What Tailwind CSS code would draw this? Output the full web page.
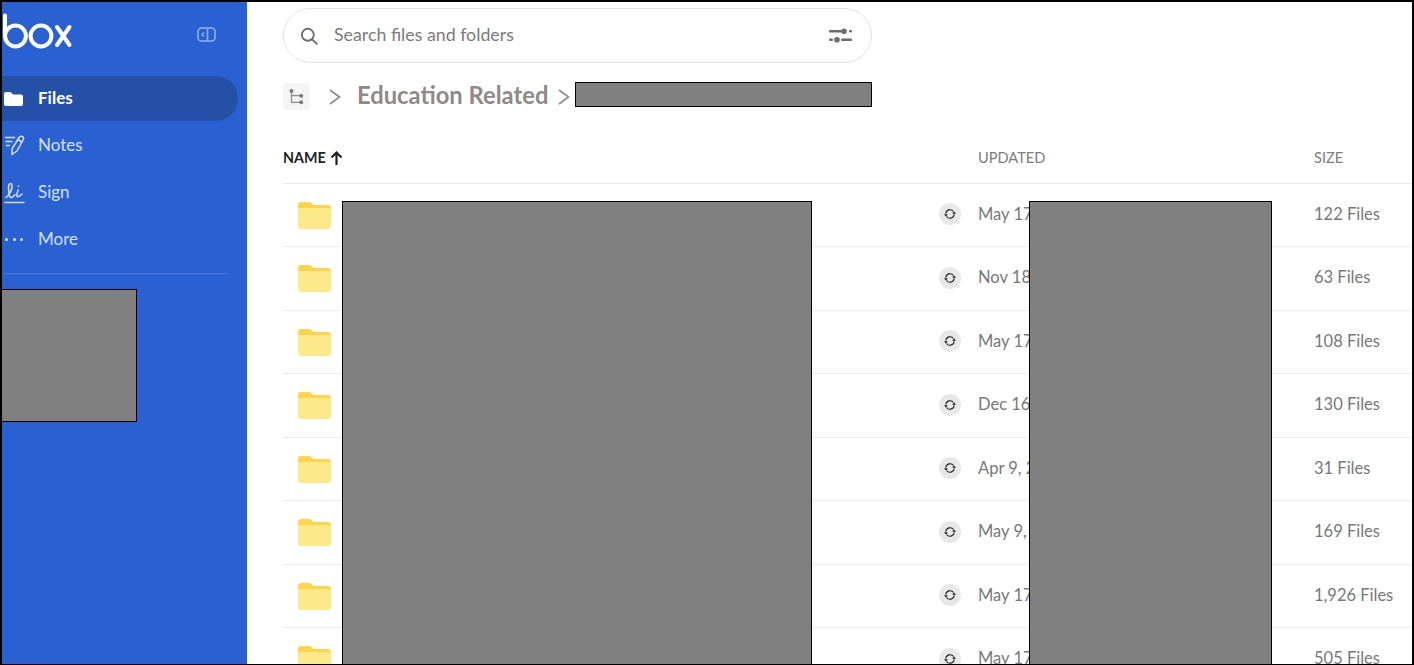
<!DOCTYPE html>
<html lang="en">

<head>
  <meta charset="UTF-8">
  <meta name="viewport" content="width=device-width, initial-scale=1.0">
  <title>Box Files</title>
  <script src="https://cdn.jsdelivr.net/npm/@tailwindcss/browser@4"></script>
</head>

<body class="bg-white text-[#787878] font-['Lato','Noto_Sans',sans-serif]">

  <div class="relative flex h-[665px] w-[1414px] overflow-hidden border-x-2 border-t-2 border-b border-black box-border">

    <!-- Sidebar -->
    <aside class="w-[245px] shrink-0 bg-[#2b60d3] text-[#d3e2fb]">
      <div class="flex h-[74px] items-start justify-between pr-[30px]">
        <svg class="ml-[1px] mt-[10px]" width="70" height="38" viewBox="0 0 70 38" fill="none" stroke="white" stroke-width="4" stroke-linecap="round">
          <path d="M2 3.500v20.500" />
          <circle cx="12.500" cy="24" r="10.400" />
          <circle cx="38" cy="24" r="10.400" />
          <path d="M54 15l12.500 18M66.500 15L54 33" />
        </svg>
        <svg class="mt-[24px]" width="20" height="18" viewBox="0 0 20 18" fill="none" stroke="#8db5f5" stroke-width="1.600">
          <rect x="1" y="2" width="17" height="13" rx="3.500" />
          <path d="M10.500 2v13" />
          <path d="M7 6.500l-2 2 2 2" stroke-width="1.400" />
        </svg>
      </div>

      <nav class="pr-[9px]">
        <a class="flex h-[45px] items-center rounded-r-full bg-[#2450a8] pb-[2px] text-[17px] font-bold text-white">
          <svg class="ml-[2px] mr-[15px] mt-[2px]" width="19" height="16" viewBox="0 0 19 16" fill="white">
            <path d="M0 3a2 2 0 0 1 2-2h4.500l2.500 2.500h8a2 2 0 0 1 2 2V13a2 2 0 0 1-2 2H2a2 2 0 0 1-2-2z" />
          </svg>
          Files
        </a>
        <a class="mt-[1px] flex h-[47px] items-center pb-[2px] text-[17px]">
          <svg class="ml-[2px] mr-[13px] mt-[2px]" width="21" height="21" viewBox="0 0 21 21" fill="none" stroke="#d3e2fb" stroke-width="1.500" stroke-linecap="round" stroke-linejoin="round">
            <path d="M1.500 2.500h9M2 6.500h6M2.500 10.500h3" />
            <path d="M15.500 2c1.500-1.500 4.500-.5 4 2L13 16l-5 3.500.2-6z" />
            <path d="M13.500 4.500l4.500 2.500" />
          </svg>
          Notes
        </a>
        <a class="flex h-[47px] items-center pb-[2px] text-[17px]">
          <svg class="ml-[2px] mr-[13px] mt-[2px]" width="21" height="22" viewBox="0 0 21 22" fill="none" stroke="#d3e2fb" stroke-width="1.500" stroke-linecap="round">
            <path d="M2 15.500c3.500-2.500 6.500-8.500 6-12C7.500 .5 4.500 1 4.500 5.500c0 3.500.5 7 1.500 9.500 1.500 1.500 3.500-.5 5-2.500" />
            <path d="M14 8c-.5 2-1.500 4.500-1 6.500.5 1 3-.5 5-2.500" />
            <path d="M14.500 4v.5" />
            <path d="M1 20.500h19" />
          </svg>
          Sign
        </a>
        <a class="flex h-[47px] items-center pb-[2px] text-[17px]">
          <span class="ml-[3px] mr-[15px] mt-[2px] flex w-[18px] justify-between">
            <span class="h-[3px] w-[3px] rounded-full bg-[#d3e2fb]"></span>
            <span class="h-[3px] w-[3px] rounded-full bg-[#d3e2fb]"></span>
            <span class="h-[3px] w-[3px] rounded-full bg-[#d3e2fb]"></span>
          </span>
          More
        </a>
      </nav>

      <div class="mr-[18px] mt-[10px] border-t border-[#4274dc]"></div>
    </aside>

    <!-- Main Content -->
    <main class="min-w-0 flex-1 pl-[36px] pt-[6px]">
      <div class="flex h-[55px] w-[589px] items-center rounded-full border border-[#e2e2e2] pl-[16px] pr-[19px]">
        <svg width="18" height="18" viewBox="0 0 18 18" fill="none" stroke="#6d6d6d" stroke-width="1.900" stroke-linecap="round">
          <circle cx="7.800" cy="7.800" r="6" />
          <path d="M12.300 12.300l4.500 4.500" />
        </svg>
        <span class="ml-[16px] flex-1 pb-[3px] text-[17.800px] text-[#7b7b7b]">Search files and folders</span>
        <svg class="mb-[1px]" width="24" height="16" viewBox="0 0 24 16" fill="#6d6d6d">
          <rect x="1" y="3" width="13" height="2.400" rx="1" />
          <circle cx="16" cy="4.200" r="2.800" />
          <rect x="21" y="3" width="3" height="2.400" rx="1" />
          <rect x="1" y="11.500" width="4" height="2.400" rx="1" />
          <circle cx="9" cy="12.700" r="2.800" />
          <rect x="13" y="11.500" width="11" height="2.400" rx="1" />
        </svg>
      </div>

      <div class="mt-[20px] flex h-[27px] items-center">
        <span class="flex h-[27px] w-[27px] items-center justify-center rounded-[4px] bg-[#f4f4f4]">
          <svg width="16" height="17" viewBox="0 0 16 17" fill="none" stroke="#8a8a8a" stroke-width="1.200">
            <path d="M2.500 3v11.300h9.700M2.500 7.700h9.700" />
            <circle cx="2.500" cy="3" r="2" fill="#7d7d7d" stroke="none" />
            <circle cx="12.200" cy="7.700" r="2" fill="#7d7d7d" stroke="none" />
            <circle cx="12.200" cy="14.300" r="2" fill="#7d7d7d" stroke="none" />
          </svg>
        </span>
        <svg class="ml-[18px]" width="14" height="18" viewBox="0 0 14 18" fill="none" stroke="#8f8a88" stroke-width="1.700">
          <path d="M2 2l9.500 7L2 16" />
        </svg>
        <span class="ml-[15px] pb-[1px] text-[23.750px] font-bold text-[#8f8a88]">Education Related</span>
        <svg class="ml-[9px]" width="14" height="18" viewBox="0 0 14 18" fill="none" stroke="#8f8a88" stroke-width="1.700">
          <path d="M2 2l9.500 7L2 16" />
        </svg>
      </div>

      <!-- Table header -->
      <div class="mt-[23px] grid h-[50.500px] grid-cols-[695px_336px_1fr] items-center border-b border-[#e8e8e8] text-[14.600px]">
        <span class="flex items-center gap-[4px] text-[14.300px] font-bold text-[#222222]">
          NAME
          <svg width="13" height="14" viewBox="0 0 13 14" fill="none" stroke="#222222" stroke-width="2.200">
            <path d="M6.500 14V2M1.500 6.500l5-5 5 5" />
          </svg>
        </span>
        <span class="text-[#7d7d7d]">UPDATED</span>
        <span class="text-[#7d7d7d]">SIZE</span>
      </div>

      <div id="rows"></div>
    </main>

    <!-- Redacted areas -->
    <div class="absolute left-[-1px] top-[287px] h-[133px] w-[136px] border border-black bg-[#808080]"></div>
    <div class="absolute left-[573px] top-[80px] h-[25px] w-[297px] border border-black bg-[#808080]"></div>
    <div class="absolute left-[340px] top-[199px] h-[480px] w-[470px] border border-black bg-[#808080]"></div>
    <div class="absolute left-[1027px] top-[199px] h-[480px] w-[243px] border border-black bg-[#808080]"></div>
  </div>

  <script>
    // Data baris folder
    const folders = [
      ["May 17", "122 Files"],
      ["Nov 18", "63 Files"],
      ["May 17", "108 Files"],
      ["Dec 16", "130 Files"],
      ["Apr 9, 2", "31 Files"],
      ["May 9, 2", "169 Files"],
      ["May 17", "1,926 Files"],
      ["May 17", "505 Files"]
    ];

    document.getElementById("rows").innerHTML = folders.map(([date, size]) => `
      <div class="grid h-[63.500px] grid-cols-[695px_336px_1fr] items-center border-b border-[#ececec] text-[16.500px]">
        <div class="flex items-center justify-between pb-[1px] pl-[15px] pr-[17px]">
          <svg width="33" height="28" viewBox="0 0 33 28" class="mt-[1px]">
            <path d="M0 4a3 3 0 0 1 3-3h8c1.500 0 2.500 1 3.500 2l1 1H30a3 3 0 0 1 3 3v4H0z" fill="#fdd54a" />
            <path d="M0 7h30a3 3 0 0 1 3 3v15a3 3 0 0 1-3 3H3a3 3 0 0 1-3-3z" fill="#fbe98a" />
          </svg>
          <span class="flex h-[22px] w-[22px] items-center justify-center rounded-full bg-[#e8e8e8]">
            <svg width="12" height="12" viewBox="0 0 12 12" fill="none" stroke="#222222" stroke-width="1.200">
              <path d="M1.800 5.500A4.300 4.300 0 0 1 9.500 3.500" />
              <path d="M10.200 6.500A4.300 4.300 0 0 1 2.500 8.500" />
              <path d="M8 5.800h4L10.200 3.600z" fill="#222222" stroke="none" />
              <path d="M4 6.200H0l1.800 2.200z" fill="#222222" stroke="none" />
            </svg>
          </span>
        </div>
        <span class="pb-[1px]">${date}</span>
        <span class="pb-[1px]">${size}</span>
      </div>
    `).join("");
  </script>

</body>

</html>
